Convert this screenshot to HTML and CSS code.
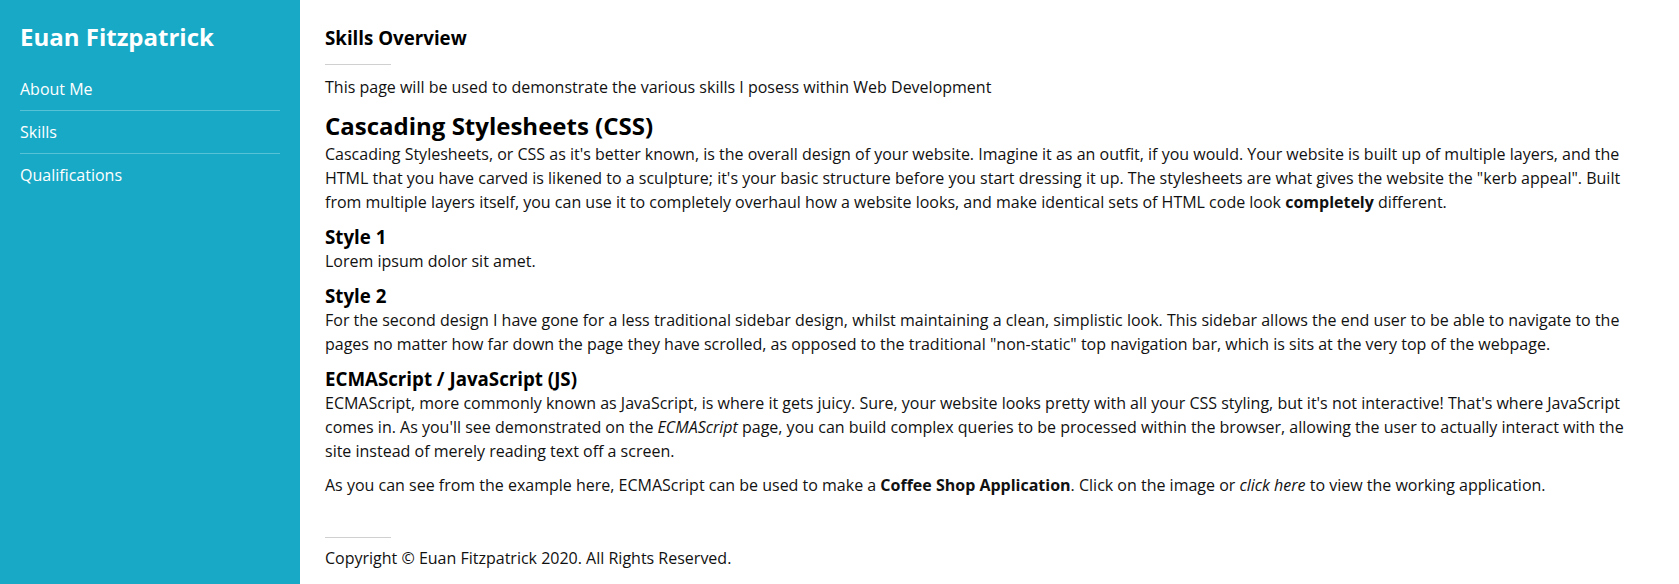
FILE: index.html
```html
<!DOCTYPE html>
<html lang="en">
<head>
<meta charset="utf-8">
<title>Skills - Euan Fitzpatrick</title>
<link rel="stylesheet" href="styles.css">
</head>
<body>
<div class="layout">
  <aside class="sidebar">
    <h2 class="brand">Euan Fitzpatrick</h2>
    <ul class="nav">
      <li class="nav-item"><a href="#">About Me</a></li>
      <li class="nav-item"><a href="#">Skills</a></li>
      <li class="nav-item"><a href="#">Qualifications</a></li>
    </ul>
  </aside>
  <main class="content">
    <h3 class="page-title">Skills Overview</h3>
    <hr class="rule">
    <p>This page will be used to demonstrate the various skills I posess within Web Development</p>

    <h2 class="section-title">Cascading Stylesheets (CSS)</h2>
    <p>Cascading Stylesheets, or CSS as it's better known, is the overall design of your website. Imagine it as an outfit, if you would. Your website is built up of multiple layers, and the HTML that you have carved is likened to a sculpture; it's your basic structure before you start dressing it up. The stylesheets are what gives the website the "kerb appeal". Built from multiple layers itself, you can use it to completely overhaul how a website looks, and make identical sets of HTML code look <strong>completely</strong> different.</p>

    <h3 class="sub-title">Style 1</h3>
    <p>Lorem ipsum dolor sit amet.</p>

    <h3 class="sub-title">Style 2</h3>
    <p>For the second design I have gone for a less traditional sidebar design, whilst maintaining a clean, simplistic look. This sidebar allows the end user to be able to navigate to the pages no matter how far down the page they have scrolled, as opposed to the traditional "non-static" top navigation bar, which is sits at the very top of the webpage.</p>

    <h3 class="sub-title">ECMAScript / JavaScript (JS)</h3>
    <p>ECMAScript, more commonly known as JavaScript, is where it gets juicy. Sure, your website looks pretty with all your CSS styling, but it's not interactive! That's where JavaScript comes in. As you'll see demonstrated on the <em>ECMAScript</em> page, you can build complex queries to be processed within the browser, allowing the user to actually interact with the site instead of merely reading text off a screen.</p>
    <p>As you can see from the example here, ECMAScript can be used to make a <strong>Coffee Shop Application</strong>. Click on the image or <em>click here</em> to view the working application.</p>

    <footer class="footer">
      <hr class="rule footer-rule">
      <p class="copyright">Copyright © Euan Fitzpatrick 2020. All Rights Reserved.</p>
    </footer>
  </main>
</div>
</body>
</html>
```
FILE: styles.css
```css
html, body {
  margin: 0;
  padding: 0;
}

body {
  font-family: "Open Sans", "Liberation Sans", sans-serif;
  font-size: 16px;
  color: #111;
  background: #fff;
}

.layout {
  display: flex;
  min-height: 100vh;
}

.sidebar {
  width: 300px;
  flex-shrink: 0;
  box-sizing: border-box;
  padding: 20px;
  background: #17a9c6;
  color: #fff;
}

.brand {
  margin: 0;
  font-size: 24px;
  font-weight: 700;
  line-height: normal;
}

.nav {
  list-style: none;
  margin: 15px 0;
  padding: 0;
}

.nav-item {
  padding: 9px 0;
  line-height: 24px;
  border-bottom: 1px solid rgba(255, 255, 255, 0.28);
}

.nav-item:last-child {
  border-bottom: none;
}

.nav-item a {
  color: #fff;
  text-decoration: none;
}

.content {
  flex: 1;
  min-width: 0;
  padding: 25px 25px 0;
}

.content p {
  margin: 0 0 10px;
  line-height: 24px;
}

.page-title,
.sub-title {
  margin: 0;
  font-size: 18.72px;
  font-weight: 700;
  line-height: normal;
  color: #000;
}

.section-title {
  margin: 0;
  font-size: 24px;
  font-weight: 700;
  line-height: normal;
  color: #000;
}

.rule {
  width: 66px;
  height: 0;
  border: 0;
  border-top: 1px solid #d0d0d0;
  margin: 14px 0 10px;
}

.footer {
  margin-top: 40px;
}

.footer-rule {
  margin: 0 0 8px;
}

.content .copyright {
  margin: 0;
}
```
